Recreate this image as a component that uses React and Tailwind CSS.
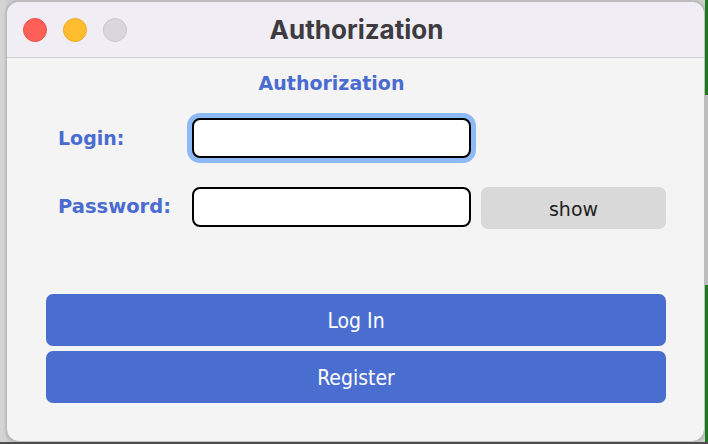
export default function App() {
  return (
    <div className="w-[708px] h-[444px] overflow-hidden bg-[#cdcdcd] flex flex-col">
      <div className="flex flex-1">
        {/* left desktop strip */}
        <div className="w-[6px] bg-[#d4d4d4]" />
        {/* window */}
        <div className="flex-1 mt-[1px] flex flex-col rounded-[13px] border border-[#bdbdbd] bg-[#f4f4f4] overflow-hidden shadow-[0_0_3px_rgba(0,0,0,0.25)]">
          {/* title bar */}
          <div className="h-[56px] shrink-0 bg-[#f0edf5] border-b border-[#cfccd3] flex items-center relative">
            <div className="flex gap-[16px] pl-[16px]">
              <span className="w-[24px] h-[24px] rounded-full bg-[#fe5f57] border border-[#e9514a]" />
              <span className="w-[24px] h-[24px] rounded-full bg-[#febc2e] border border-[#e9aa25]" />
              <span className="w-[24px] h-[24px] rounded-full bg-[#d9d6de] border border-[#c8c5cd]" />
            </div>
            <div className="absolute inset-0 flex items-center justify-center pl-[2px] pointer-events-none">
              <span className="font-['Inter',sans-serif] font-bold text-[26px] text-[#3d3b40]">Authorization</span>
            </div>
          </div>

          {/* body */}
          <div className="flex flex-col pl-[39px] pr-[38px]">
            <div className="mt-[14px] h-[22px] flex items-center justify-center pr-[49px] font-['DejaVu_Sans',sans-serif] font-bold text-[19px] text-[#4a6bd0]">
              Authorization
            </div>

            <div className="mt-[24px] flex items-center pl-[12px]">
              <div className="w-[134px] font-['DejaVu_Sans',sans-serif] font-bold text-[19px] text-[#4a6bd0]">Login:</div>
              <div className="w-[279px] h-[40px] rounded-[8px] border-2 border-black bg-white shadow-[0_0_0_5px_#8dbaf6]" />
            </div>

            <div className="mt-[28px] flex items-center pl-[12px]">
              <div className="w-[134px] font-['DejaVu_Sans',sans-serif] font-bold text-[19.5px] text-[#4a6bd0]">Password:</div>
              <div className="w-[279px] h-[40px] rounded-[8px] border-2 border-black bg-white" />
              <button className="ml-[10px] translate-y-[1px] flex-1 h-[42px] pt-[3px] rounded-[7px] bg-[#d9d9d9] font-['DejaVu_Sans',sans-serif] text-[19px] text-[#222222]">
                show
              </button>
            </div>

            <div className="mt-[66px] flex flex-col gap-[5px]">
              <button className="h-[52px] pt-[3px] rounded-[7px] bg-[#4a6ed0] text-white text-[21px] font-['DejaVu_Sans_Condensed','DejaVu_Sans',sans-serif] font-stretch-condensed">
                Log In
              </button>
              <button className="h-[52px] pt-[3px] rounded-[7px] bg-[#4a6ed0] text-white text-[21px] font-['DejaVu_Sans_Condensed','DejaVu_Sans',sans-serif] font-stretch-condensed">
                Register
              </button>
            </div>
          </div>
        </div>
        {/* right desktop strip */}
        <div className="w-[3px] flex flex-col">
          <div className="h-[95px] bg-[#1c7a1c]" />
          <div className="h-[190px] bg-[#bdbdbd]" />
          <div className="flex-1 bg-[#1c7a1c]" />
        </div>
      </div>
      <div className="h-[2px] bg-[#4d4d4d]" />
    </div>
  );
}
